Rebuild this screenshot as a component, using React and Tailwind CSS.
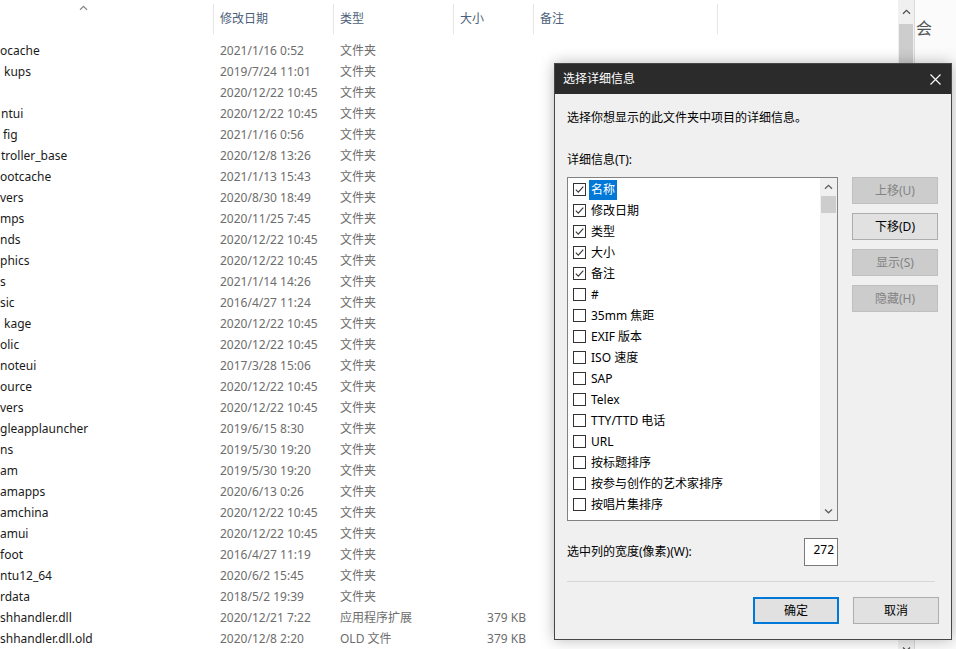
import React from "react";

const files = [
  ["ocache", 0, "2021/1/16 0:52", "文件夹", ""],
  ["kups", 4, "2019/7/24 11:01", "文件夹", ""],
  ["", 0, "2020/12/22 10:45", "文件夹", ""],
  ["ntui", 1, "2020/12/22 10:45", "文件夹", ""],
  ["fig", 3, "2021/1/16 0:56", "文件夹", ""],
  ["troller_base", 1, "2020/12/8 13:26", "文件夹", ""],
  ["ootcache", 0, "2021/1/13 15:43", "文件夹", ""],
  ["vers", 0, "2020/8/30 18:49", "文件夹", ""],
  ["mps", 0, "2020/11/25 7:45", "文件夹", ""],
  ["nds", 0, "2020/12/22 10:45", "文件夹", ""],
  ["phics", 0, "2020/12/22 10:45", "文件夹", ""],
  ["s", 0, "2021/1/14 14:26", "文件夹", ""],
  ["sic", 0, "2016/4/27 11:24", "文件夹", ""],
  ["kage", 4, "2020/12/22 10:45", "文件夹", ""],
  ["olic", 0, "2020/12/22 10:45", "文件夹", ""],
  ["noteui", 0, "2017/3/28 15:06", "文件夹", ""],
  ["ource", 0, "2020/12/22 10:45", "文件夹", ""],
  ["vers", 0, "2020/12/22 10:45", "文件夹", ""],
  ["gleapplauncher", 0, "2019/6/15 8:30", "文件夹", ""],
  ["ns", 0, "2019/5/30 19:20", "文件夹", ""],
  ["am", 0, "2019/5/30 19:20", "文件夹", ""],
  ["amapps", 0, "2020/6/13 0:26", "文件夹", ""],
  ["amchina", 0, "2020/12/22 10:45", "文件夹", ""],
  ["amui", 0, "2020/12/22 10:45", "文件夹", ""],
  ["foot", 0, "2016/4/27 11:19", "文件夹", ""],
  ["ntu12_64", 0, "2020/6/2 15:45", "文件夹", ""],
  ["rdata", 0, "2018/5/2 19:39", "文件夹", ""],
  ["shhandler.dll", 0, "2020/12/21 7:22", "应用程序扩展", "379 KB"],
  ["shhandler.dll.old", 0, "2020/12/8 2:20", "OLD 文件", "379 KB"],
];

const details = [
  ["名称", true],
  ["修改日期", true],
  ["类型", true],
  ["大小", true],
  ["备注", true],
  ["#", false],
  ["35mm 焦距", false],
  ["EXIF 版本", false],
  ["ISO 速度", false],
  ["SAP", false],
  ["Telex", false],
  ["TTY/TTD 电话", false],
  ["URL", false],
  ["按标题排序", false],
  ["按参与创作的艺术家排序", false],
  ["按唱片集排序", false],
];

const Chevron = ({ down = false, color = "#606060" }) => (
  <svg width="9" height="6" viewBox="0 0 9 6">
    <path
      d={down ? "M1 1.5 L4.5 4.8 L8 1.5" : "M1 4.8 L4.5 1.3 L8 4.8"}
      fill="none"
      stroke={color}
      strokeWidth="1.3"
    />
  </svg>
);

const CheckBox = ({ checked }) => (
  <div className="w-[13px] h-[13px] border border-[#333] bg-white flex items-center justify-center shrink-0">
    {checked && (
      <svg width="11" height="11" viewBox="0 0 11 11">
        <path d="M1.8 5.6 L4.3 8.1 L9.3 2.6" fill="none" stroke="#333" strokeWidth="1.1" />
      </svg>
    )}
  </div>
);

const SideButton = ({ label, enabled }) => (
  <div
    className={
      enabled
        ? "w-[86px] h-[27px] flex items-center justify-center border border-[#adadad] bg-[#e1e1e1] text-black"
        : "w-[86px] h-[27px] flex items-center justify-center border border-[#bfbfbf] bg-[#cccccc] text-[#838383]"
    }
  >
    {label}
  </div>
);

const Explorer = () => (
  <div className="flex h-full">
    <div className="w-[898px] h-full">
      <div className="flex h-[40px] text-[#4c607a]">
        <div className="w-[213px] pl-[79px] pt-[5px]">
          <Chevron color="#8a8a8a" />
        </div>
        <div className="w-[120px] h-[30px] mt-[4px] border-l border-[#e5e5e5] pl-[6px] flex items-center">修改日期</div>
        <div className="w-[120px] h-[30px] mt-[4px] border-l border-[#e5e5e5] pl-[6px] flex items-center">类型</div>
        <div className="w-[80px] h-[30px] mt-[4px] border-l border-[#e5e5e5] pl-[6px] flex items-center">大小</div>
        <div className="w-[184px] h-[30px] mt-[4px] border-l border-[#e5e5e5] pl-[6px] flex items-center">备注</div>
        <div className="w-[1px] h-[30px] mt-[4px] bg-[#e5e5e5]" />
      </div>
      {files.map(([name, pad, date, type, size], i) => (
        <div key={i} className="flex h-[21px] items-center">
          <div className="w-[213px] overflow-hidden whitespace-nowrap text-[#1a1a1a]" style={{ paddingLeft: pad }}>
            {name}
          </div>
          <div className="w-[120px] pl-[7px] text-[#6d6d6d] whitespace-nowrap">{date}</div>
          <div className="w-[120px] pl-[7px] text-[#6d6d6d] whitespace-nowrap">{type}</div>
          <div className="w-[80px] pr-[7px] text-right text-[#6d6d6d] whitespace-nowrap">{size}</div>
        </div>
      ))}
    </div>
    <div className="w-[16px] h-[657px] flex flex-col bg-[#f0f0f0]">
      <div className="h-[24px] flex items-center justify-center">
        <Chevron color="#505050" />
      </div>
      <div className="h-[300px] mx-[1px] bg-[#cdcdcd]" />
      <div className="flex-1" />
      <div className="h-[17px] flex items-center justify-center">
        <Chevron down color="#505050" />
      </div>
    </div>
    <div className="flex-1 border-l border-[#d9d9d9] bg-[#fbfbfb] pt-[18px] pl-[1px] text-[16px] text-[#555] leading-[20px]">
      会
    </div>
  </div>
);

const Dialog = () => (
  <div className="absolute left-[554px] top-[63px] w-[398px] h-[577px] border border-[#474747] bg-[#f0f0f0] shadow-[0_0_14px_rgba(0,0,0,0.28)] flex flex-col">
    <div className="h-[30px] bg-[#2b2b2b] flex items-center justify-between pl-[8px] pr-[10px] text-white">
      <span>选择详细信息</span>
      <svg width="11" height="11" viewBox="0 0 11 11">
        <path d="M0.5 0.5 L10.5 10.5 M10.5 0.5 L0.5 10.5" stroke="#fff" strokeWidth="1.1" />
      </svg>
    </div>
    <div className="flex flex-col pl-[12px]">
      <div className="mt-[16px] leading-[16px] text-black">选择你想显示的此文件夹中项目的详细信息。</div>
      <div className="mt-[26px] leading-[16px] text-black">详细信息(T):</div>
      <div className="mt-[9px] flex items-start">
        <div className="w-[271px] h-[344px] border border-[#828282] bg-white flex">
          <div className="flex-1 flex flex-col pt-[1px]">
            {details.map(([label, checked], i) => (
              <div key={i} className="h-[21px] flex items-center pl-[5px] text-black">
                <CheckBox checked={checked} />
                <span
                  className={
                    i === 0
                      ? "ml-[3px] px-[2px] h-[20px] flex items-center bg-[#0078d7] text-white"
                      : "ml-[3px] px-[2px] h-[20px] flex items-center"
                  }
                >
                  {label}
                </span>
              </div>
            ))}
          </div>
          <div className="w-[17px] h-full bg-[#f0f0f0] flex flex-col">
            <div className="h-[18px] flex items-center justify-center">
              <Chevron color="#606060" />
            </div>
            <div className="h-[17px] mx-[1px] bg-[#cdcdcd]" />
            <div className="flex-1" />
            <div className="h-[18px] flex items-center justify-center">
              <Chevron down color="#606060" />
            </div>
          </div>
        </div>
        <div className="ml-[14px] flex flex-col gap-[9px]">
          <SideButton label="上移(U)" enabled={false} />
          <SideButton label="下移(D)" enabled />
          <SideButton label="显示(S)" enabled={false} />
          <SideButton label="隐藏(H)" enabled={false} />
        </div>
      </div>
      <div className="w-[271px] mt-[17px] flex items-center justify-between">
        <span className="text-black">选中列的宽度(像素)(W):</span>
        <div className="w-[34px] h-[28px] border border-[#7a7a7a] bg-white flex justify-end pr-[3px] pt-[2px] text-black">
          272
        </div>
      </div>
      <div className="w-[368px] mt-[15px] h-[1px] bg-[#d7d7d7]" />
      <div className="w-[372px] mt-[15px] flex justify-end gap-[14px]">
        <div className="w-[86px] h-[27px] border-2 border-[#0078d7] bg-[#e1e1e1] flex items-center justify-center text-black">
          确定
        </div>
        <div className="w-[86px] h-[27px] border border-[#adadad] bg-[#e1e1e1] flex items-center justify-center text-black">
          取消
        </div>
      </div>
    </div>
  </div>
);

export default function App() {
  return (
    <div className="relative w-[956px] h-[649px] overflow-hidden bg-white text-[12px] font-['Noto_Sans','Noto_Sans_CJK_SC',sans-serif]">
      <Explorer />
      <Dialog />
    </div>
  );
}
